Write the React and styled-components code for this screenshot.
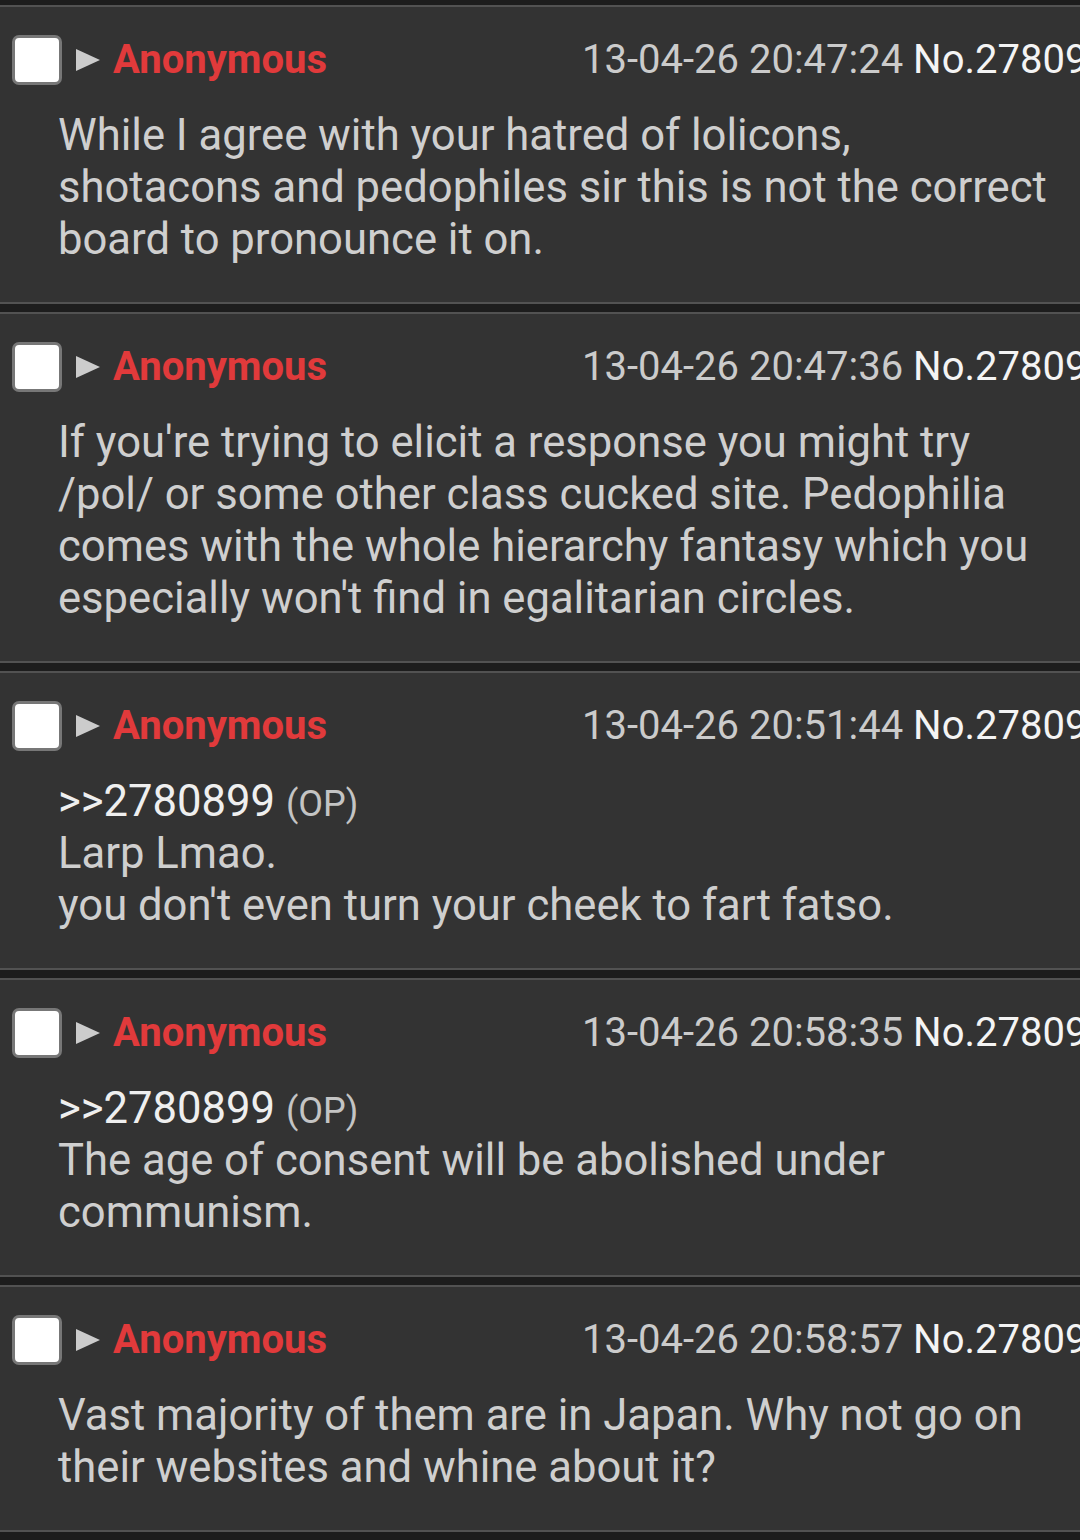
import styled, { createGlobalStyle } from "styled-components";

const GlobalStyle = createGlobalStyle`
  html, body {
    margin: 0;
    padding: 0;
    background: #1d1d1d;
  }
  body {
    font-family: Roboto, "Noto Sans", "Liberation Sans", sans-serif;
  }
`;

const Thread = styled.div`
  width: 1080px;
  padding-top: 5px;
  overflow: hidden;
`;

const Post = styled.div`
  background: #333333;
  border-top: 2px solid #525252;
  border-bottom: 2px solid #525252;
  margin-bottom: 8px;
  padding: 28px 0 36px;
`;

const Header = styled.div`
  display: grid;
  grid-template-columns: 570px auto;
  align-items: center;
  padding-left: 12px;
  height: 50px;
  white-space: nowrap;
  overflow: hidden;
`;

const Left = styled.div`
  display: flex;
  align-items: center;
`;

const Checkbox = styled.div`
  width: 44px;
  height: 44px;
  background: #ffffff;
  border: 3px solid #777777;
  border-radius: 7px;
`;

const Arrow = styled.svg`
  width: 26px;
  height: 24px;
  margin-left: 13px;
  margin-right: 12px;
`;

const Name = styled.span`
  color: #e13a3b;
  font-size: 40px;
  font-weight: 700;
  line-height: 46px;
`;

const Meta = styled.div`
  font-size: 40px;
  line-height: 46px;
  color: #cbcbcb;
`;

const PostNo = styled.span`
  color: #f4f4f4;
`;

const Body = styled.div`
  margin-top: 25px;
  padding-left: 58px;
  font-size: 43.6px;
  line-height: 52px;
  color: #cfcfcf;
  white-space: nowrap;
`;

const Line = styled.div`
  height: 52px;
`;

const Quote = styled.span`
  color: #efefef;
`;

const OpTag = styled.span`
  font-size: 36px;
  line-height: 1;
  color: #c4c4c4;
`;

const posts = [
  {
    time: "13-04-26 20:47:24",
    lines: [
      "While I agree with your hatred of lolicons,",
      "shotacons and pedophiles sir this is not the correct",
      "board to pronounce it on.",
    ],
  },
  {
    time: "13-04-26 20:47:36",
    lines: [
      "If you're trying to elicit a response you might try",
      "/pol/ or some other class cucked site. Pedophilia",
      "comes with the whole hierarchy fantasy which you",
      "especially won't find in egalitarian circles.",
    ],
  },
  {
    time: "13-04-26 20:51:44",
    quote: "2780899",
    lines: ["Larp Lmao.", "you don't even turn your cheek to fart fatso."],
  },
  {
    time: "13-04-26 20:58:35",
    quote: "2780899",
    lines: ["The age of consent will be abolished under", "communism."],
  },
  {
    time: "13-04-26 20:58:57",
    lines: [
      "Vast majority of them are in Japan. Why not go on",
      "their websites and whine about it?",
    ],
  },
];

function PostItem({ post }) {
  return (
    <Post>
      <Header>
        <Left>
          <Checkbox />
          <Arrow viewBox="0 0 26 24">
            <polygon points="1,1 25,12 1,23" fill="#cccccc" />
          </Arrow>
          <Name>Anonymous</Name>
        </Left>
        <Meta>
          {post.time} <PostNo>No.2780999</PostNo>
        </Meta>
      </Header>
      <Body>
        {post.quote && (
          <Line>
            <Quote>&gt;&gt;{post.quote}</Quote> <OpTag>(OP)</OpTag>
          </Line>
        )}
        {post.lines.map((l, i) => (
          <Line key={i}>{l}</Line>
        ))}
      </Body>
    </Post>
  );
}

export default function App() {
  return (
    <>
      <GlobalStyle />
      <Thread>
        {posts.map((p, i) => (
          <PostItem key={i} post={p} />
        ))}
      </Thread>
    </>
  );
}
